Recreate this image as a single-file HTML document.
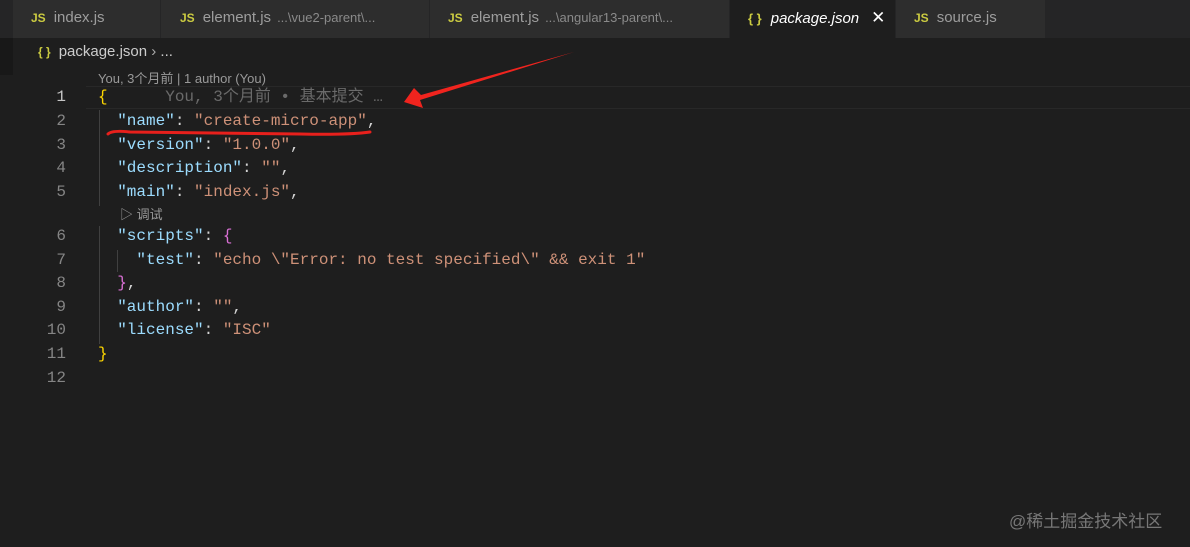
<!DOCTYPE html>
<html><head><meta charset="utf-8"><style>
*{margin:0;padding:0;box-sizing:border-box}
body{width:1190px;height:547px;background:#1e1e1e;overflow:hidden;position:relative;font-family:"Liberation Sans","Noto Sans CJK SC",sans-serif}
.tabs{position:absolute;left:0;top:0;width:1190px;height:38px;background:#252526}
.tab{position:absolute;top:0;height:38px;background:#2d2d2d;color:#9d9d9d;font-size:15px;line-height:36px;white-space:nowrap;border-right:1px solid #252526}
.tab .js{color:#cbcb41;font-weight:bold;font-size:12px;margin-right:8px}
.tab .p{font-size:13px;color:#8a8a8a;margin-left:6px}
.left{position:absolute;left:0;top:38px;width:13px;height:37px;background:#181818}
.bc{position:absolute;left:38px;top:43px;color:#ccc;font-size:15px}
.lens{position:absolute;left:98px;top:68px;color:#999;font-size:13px}
.code{position:absolute;left:0;top:85px;font-family:"Liberation Mono","Noto Sans CJK SC",monospace;font-size:16px}
.ln{position:absolute;left:0;width:66px;text-align:right;color:#858585;height:24px;line-height:24px}
.c{position:absolute;left:98px;white-space:pre;height:24px;line-height:24px;color:#d4d4d4}
.k{color:#9cdcfe}.s{color:#ce9178}.y{color:#ffd700}.m{color:#da70d6}
.cur{position:absolute;left:86px;top:86px;width:1104px;height:23px;border-top:1px solid #282828;border-bottom:1px solid #282828}
.g{position:absolute;width:1px;background:#404040}
</style></head><body>
<div class="tabs">
<div class="tab" style="left:13px;width:148px;padding-left:18px"><span class="js">JS</span>index.js</div>
<div class="tab" style="left:161px;width:269px;padding-left:19px"><span class="js">JS</span>element.js<span class="p">...\vue2-parent\...</span></div>
<div class="tab" style="left:430px;width:300px;padding-left:18px"><span class="js">JS</span>element.js<span class="p">...\angular13-parent\...</span></div>
<div class="tab" style="left:730px;width:166px;padding-left:18px;background:#1e1e1e;color:#fff"><span style="color:#cbcb41;font-weight:bold;font-size:13px;margin-right:9px">{ }</span><i>package.json</i><span style="margin-left:12px;font-size:17px">✕</span></div>
<div class="tab" style="left:896px;width:150px;padding-left:18px"><span class="js">JS</span>source.js</div>
</div>
<div class="left"></div>
<div class="bc"><span style="color:#cbcb41;font-weight:bold;font-size:12px;margin-right:8px">{ }</span>package.json <span style="color:#aaa">›</span> ...</div>
<div class="lens">You, 3个月前 | 1 author (You)</div>
<div class="cur"></div>
<div class="g" style="left:99px;top:110px;height:96px"></div>
<div class="g" style="left:99px;top:226px;height:118px"></div>
<div class="g" style="left:117px;top:250px;height:22px"></div>
<div class="code">
<div class="ln" style="top:0;color:#c6c6c6">1</div><div class="c" style="top:0"><span class="y">{</span>      <span style="color:#6a6a6a">You, 3个月前 • 基本提交 …</span></div>
<div class="ln" style="top:24px">2</div><div class="c" style="top:24px">  <span class="k">"name"</span>: <span class="s">"create-micro-app"</span>,</div>
<div class="ln" style="top:48px">3</div><div class="c" style="top:48px">  <span class="k">"version"</span>: <span class="s">"1.0.0"</span>,</div>
<div class="ln" style="top:71px">4</div><div class="c" style="top:71px">  <span class="k">"description"</span>: <span class="s">""</span>,</div>
<div class="ln" style="top:95px">5</div><div class="c" style="top:95px">  <span class="k">"main"</span>: <span class="s">"index.js"</span>,</div>
<div class="c" style="top:118px;left:120px;font-family:'Liberation Sans','Noto Sans CJK SC',sans-serif;font-size:13px;color:#999">▷ 调试</div>
<div class="ln" style="top:139px">6</div><div class="c" style="top:139px">  <span class="k">"scripts"</span>: <span class="m">{</span></div>
<div class="ln" style="top:163px">7</div><div class="c" style="top:163px">    <span class="k">"test"</span>: <span class="s">"echo \"Error: no test specified\" &amp;&amp; exit 1"</span></div>
<div class="ln" style="top:186px">8</div><div class="c" style="top:186px">  <span class="m">}</span>,</div>
<div class="ln" style="top:210px">9</div><div class="c" style="top:210px">  <span class="k">"author"</span>: <span class="s">""</span>,</div>
<div class="ln" style="top:233px">10</div><div class="c" style="top:233px">  <span class="k">"license"</span>: <span class="s">"ISC"</span></div>
<div class="ln" style="top:257px">11</div><div class="c" style="top:257px"><span class="y">}</span></div>
<div class="ln" style="top:281px">12</div>
</div>
<svg style="position:absolute;left:0;top:0" width="1190" height="547">
<path d="M108 134 Q112 130 130 132 L300 134 Q350 135 370 132" stroke="#e8201c" stroke-width="3" fill="none" stroke-linecap="round"/>
<path d="M574 52 L421 95 L414 88 L404 102 L423 108 L420 100 Z" fill="#f0241e"/>
</svg>
<div style="position:absolute;left:1009px;top:507px;color:#777;font-size:17px">@稀土掘金技术社区</div>
</body></html>
